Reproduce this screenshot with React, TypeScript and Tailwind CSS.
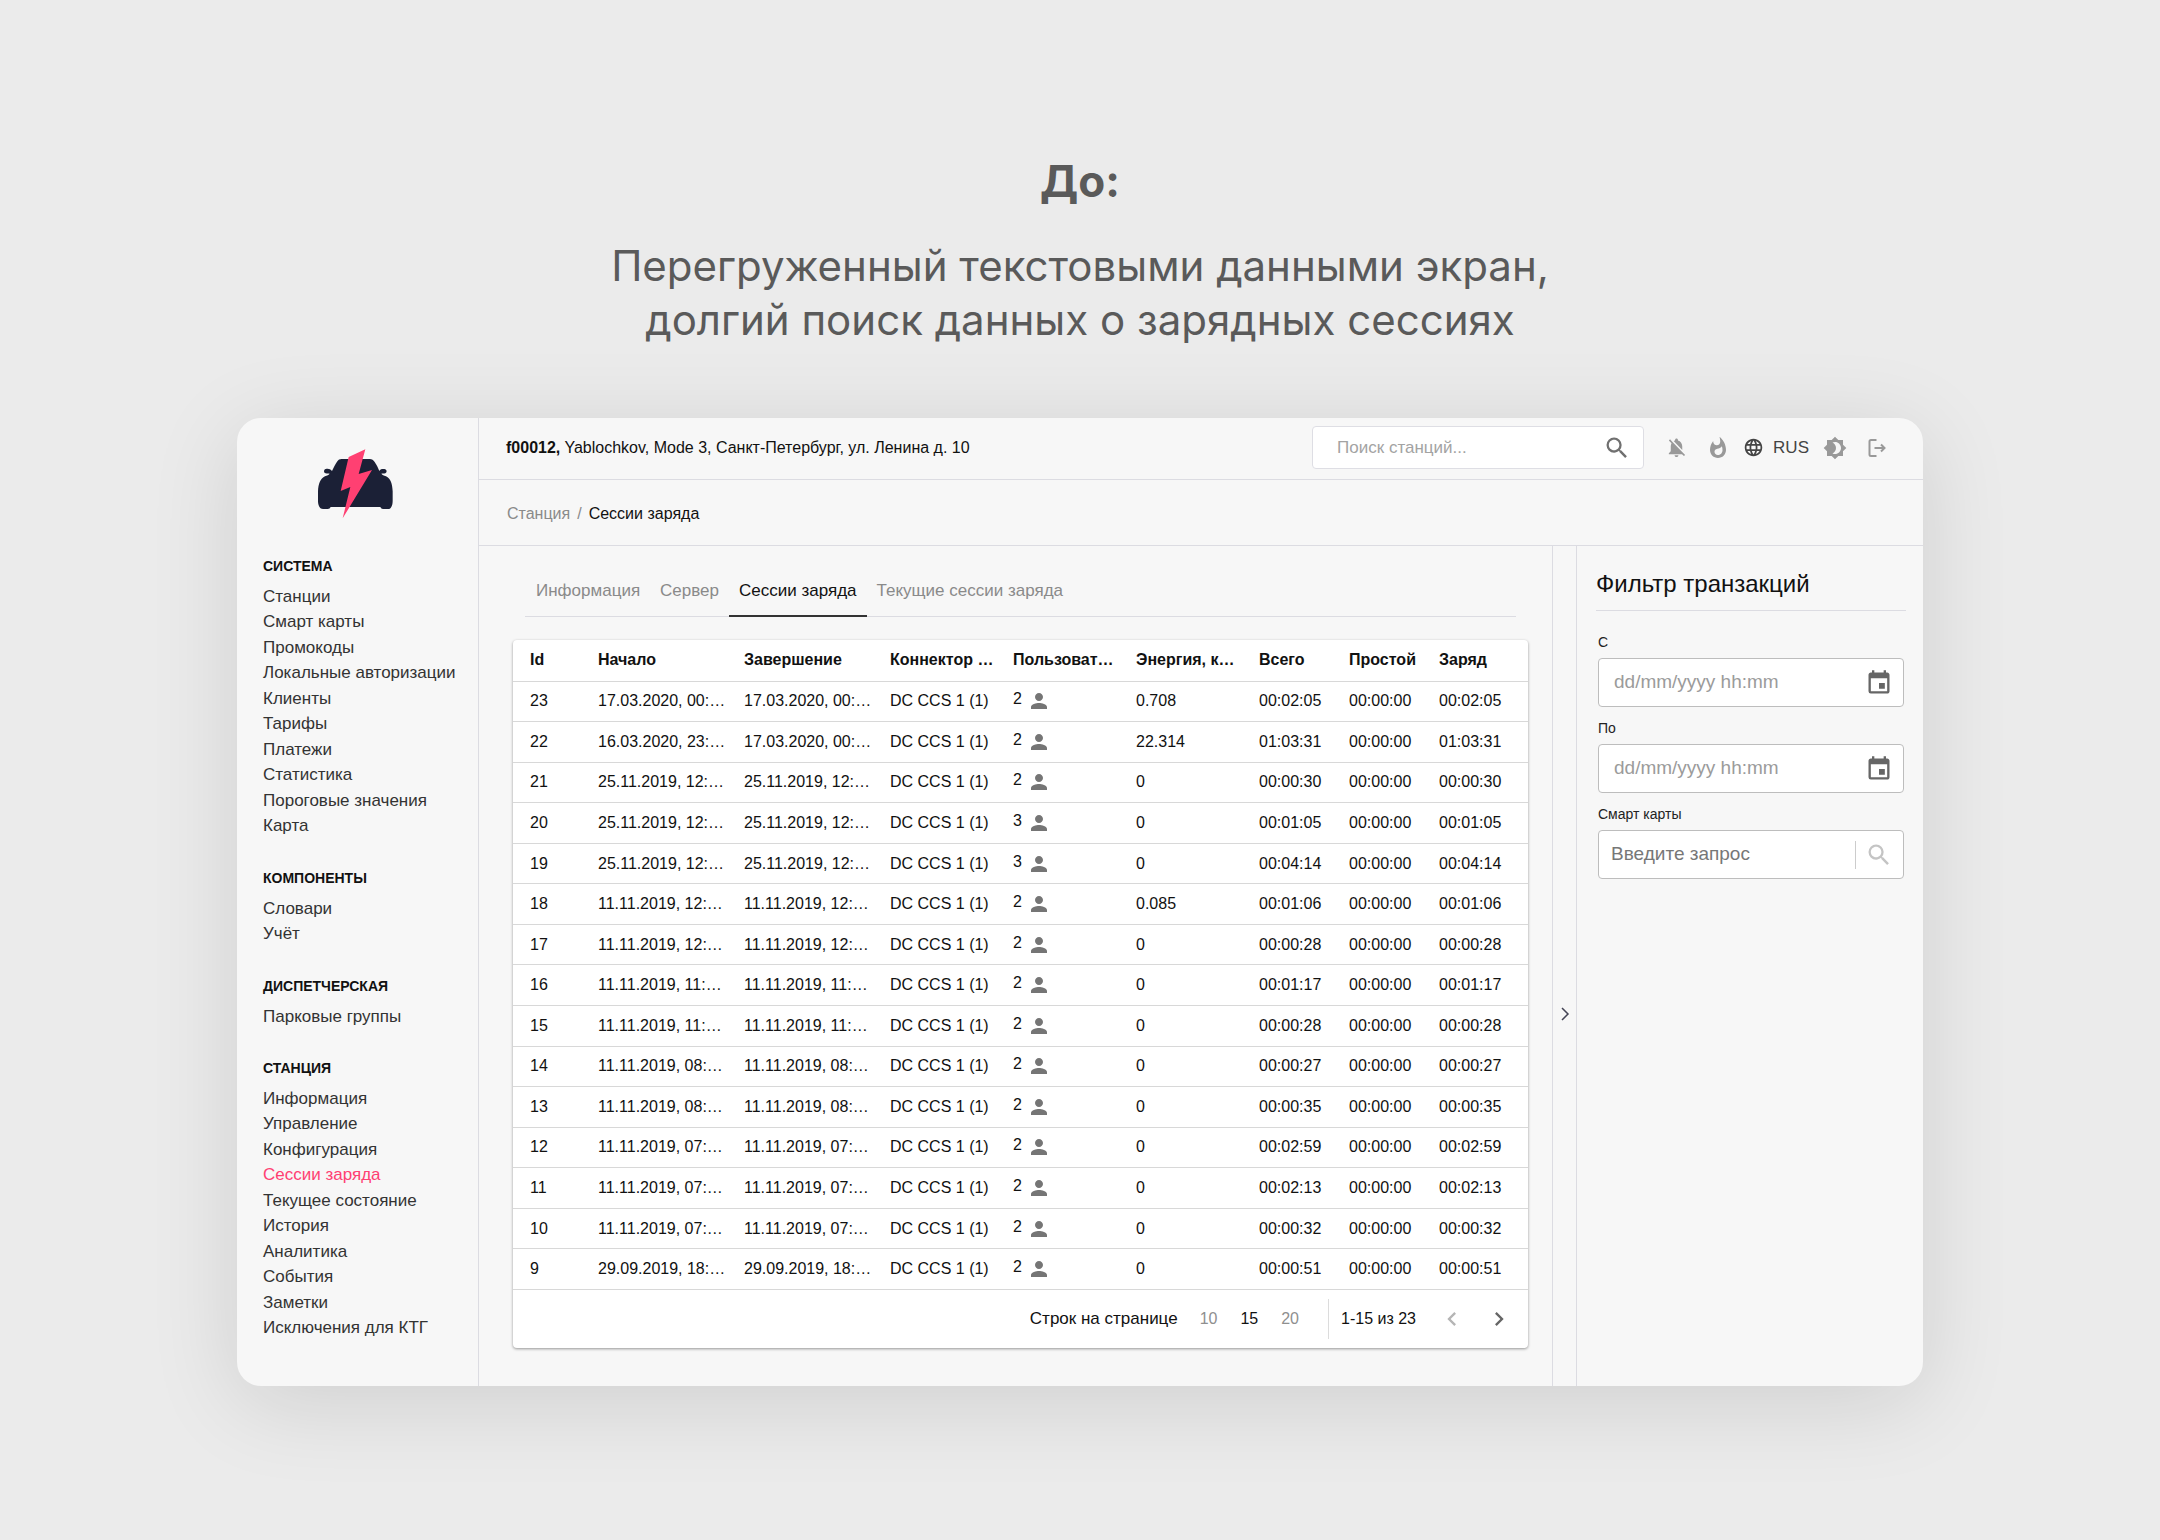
import { ReactNode, useState } from "react";
import clsx from "clsx";
import {
  MdBrightness4,
  MdChevronLeft,
  MdChevronRight,
  MdEvent,
  MdLanguage,
  MdNotificationsOff,
  MdPerson,
  MdSearch,
  MdWhatshot,
} from "react-icons/md";

interface Session {
  id: number;
  start: string;
  end: string;
  users: number;
  energy: string;
  total: string;
}

const MENU = [
  {
    title: "СИСТЕМА",
    items: [
      "Станции",
      "Смарт карты",
      "Промокоды",
      "Локальные авторизации",
      "Клиенты",
      "Тарифы",
      "Платежи",
      "Статистика",
      "Пороговые значения",
      "Карта",
    ],
  },
  { title: "КОМПОНЕНТЫ", items: ["Словари", "Учёт"] },
  { title: "ДИСПЕТЧЕРСКАЯ", items: ["Парковые группы"] },
  {
    title: "СТАНЦИЯ",
    items: [
      "Информация",
      "Управление",
      "Конфигурация",
      "Сессии заряда",
      "Текущее состояние",
      "История",
      "Аналитика",
      "События",
      "Заметки",
      "Исключения для КТГ",
    ],
  },
];

const TABS = ["Информация", "Сервер", "Сессии заряда", "Текущие сессии заряда"];

const COLUMNS = [
  { title: "Id", width: "w-[77px]" },
  { title: "Начало", width: "w-[146px]" },
  { title: "Завершение", width: "w-[146px]" },
  { title: "Коннектор …", width: "w-[123px]" },
  { title: "Пользоват…", width: "w-[123px]" },
  { title: "Энергия, к…", width: "w-[123px]" },
  { title: "Всего", width: "w-[90px]" },
  { title: "Простой", width: "w-[90px]" },
  { title: "Заряд", width: "w-[97px]" },
];

const SESSIONS: Session[] = [
  { id: 23, start: "17.03.2020, 00:…", end: "17.03.2020, 00:…", users: 2, energy: "0.708", total: "00:02:05" },
  { id: 22, start: "16.03.2020, 23:…", end: "17.03.2020, 00:…", users: 2, energy: "22.314", total: "01:03:31" },
  { id: 21, start: "25.11.2019, 12:…", end: "25.11.2019, 12:…", users: 2, energy: "0", total: "00:00:30" },
  { id: 20, start: "25.11.2019, 12:…", end: "25.11.2019, 12:…", users: 3, energy: "0", total: "00:01:05" },
  { id: 19, start: "25.11.2019, 12:…", end: "25.11.2019, 12:…", users: 3, energy: "0", total: "00:04:14" },
  { id: 18, start: "11.11.2019, 12:…", end: "11.11.2019, 12:…", users: 2, energy: "0.085", total: "00:01:06" },
  { id: 17, start: "11.11.2019, 12:…", end: "11.11.2019, 12:…", users: 2, energy: "0", total: "00:00:28" },
  { id: 16, start: "11.11.2019, 11:…", end: "11.11.2019, 11:…", users: 2, energy: "0", total: "00:01:17" },
  { id: 15, start: "11.11.2019, 11:…", end: "11.11.2019, 11:…", users: 2, energy: "0", total: "00:00:28" },
  { id: 14, start: "11.11.2019, 08:…", end: "11.11.2019, 08:…", users: 2, energy: "0", total: "00:00:27" },
  { id: 13, start: "11.11.2019, 08:…", end: "11.11.2019, 08:…", users: 2, energy: "0", total: "00:00:35" },
  { id: 12, start: "11.11.2019, 07:…", end: "11.11.2019, 07:…", users: 2, energy: "0", total: "00:02:59" },
  { id: 11, start: "11.11.2019, 07:…", end: "11.11.2019, 07:…", users: 2, energy: "0", total: "00:02:13" },
  { id: 10, start: "11.11.2019, 07:…", end: "11.11.2019, 07:…", users: 2, energy: "0", total: "00:00:32" },
  { id: 9, start: "29.09.2019, 18:…", end: "29.09.2019, 18:…", users: 2, energy: "0", total: "00:00:51" },
];

function Logo() {
  return (
    <svg viewBox="84 57 225 210" className="h-[70px] w-[75px]" aria-hidden="true">
      <path
        fill="#1b2036"
        d="M126 123C131 112 136 102 141 95C145 89 149 87 155 87H239C246 87 250 90 254 96C259 103 264 113 268 123C271 117 276 116 283 117C291 118 292 127 286 130C281 131 277 130 274 131C276 134 282 137 288 139C302 145 307 162 308 184V213C308 222 306 229 302 234C300 237 296 237 292 237H279C275 237 273 235 271 231H122C120 235 118 237 113 237H99C94 237 91 236 89 232C86 227 84 221 84 213V184C85 162 91 145 105 139C111 137 117 134 119 131C115 130 111 131 107 130C100 128 101 119 107 117C115 115 121 117 126 123Z"
      />
      <path fill="#ff4072" d="M176 81L226 58L206 132L246 120L158 265L181 171L152 183Z" />
    </svg>
  );
}

function LogoutIcon() {
  return (
    <svg viewBox="0 0 20 20" className="size-5" fill="none" stroke="currentColor" strokeWidth="2" aria-hidden="true">
      <path d="M9.500 2H4Q2.500 2 2.500 3.500V16.500Q2.500 18 4 18H9.500M7.500 10H17.500M14 6.500L17.500 10L14 13.500" />
    </svg>
  );
}

function Sidebar() {
  return (
    <aside className="w-[242px] shrink-0 border-r border-[#dcdce2] pl-[26px]">
      <div className="flex pt-[31px] pl-[55px]">
        <Logo />
      </div>
      <nav className="flex flex-col gap-[29px] pt-[37px]">
        {MENU.map((section) => (
          <div key={section.title}>
            <h2 className="mb-2 text-[14px] leading-5 font-bold text-[#111]">{section.title}</h2>
            <ul>
              {section.items.map((item) => (
                <li key={item} className="odd:h-[25px] even:h-[26px]">
                  <a
                    href="#"
                    className={clsx(
                      "text-[17px] leading-[25px] whitespace-nowrap",
                      item === "Сессии заряда" ? "text-[#ff4072]" : "text-[#333]"
                    )}
                  >
                    {item}
                  </a>
                </li>
              ))}
            </ul>
          </div>
        ))}
      </nav>
    </aside>
  );
}

function Topbar() {
  return (
    <header className="flex h-[62px] items-center justify-between border-b border-[#dcdce2] pr-9 pb-[2px] pl-[27px]">
      <p className="text-[16px] leading-5 text-[#111]">
        <b>f00012,</b> Yablochkov, Mode 3, Санкт-Петербург, ул. Ленина д. 10
      </p>
      <div className="flex items-center text-[#999]">
        <label className="mr-[21px] flex h-[43px] w-[332px] items-center rounded border border-[#dedee4] bg-white pr-3 pl-6">
          <input
            type="search"
            aria-label="Поиск станций"
            placeholder="Поиск станций..."
            className="min-w-0 flex-1 text-[17px] outline-none placeholder:text-[#a3a3a3]"
          />
          <MdSearch className="size-7 text-[#707070]" />
        </label>
        <button type="button" aria-label="Уведомления" className="mr-[18px]">
          <MdNotificationsOff className="size-[23px]" />
        </button>
        <button type="button" aria-label="Популярное" className="mr-[13px]">
          <MdWhatshot className="size-6" />
        </button>
        <button type="button" className="mr-[14px] flex items-center gap-[9px] text-[17px] text-[#444]">
          <MdLanguage className="size-[21px]" />
          RUS
        </button>
        <button type="button" aria-label="Тема" className="mr-5">
          <MdBrightness4 className="size-6" />
        </button>
        <button type="button" aria-label="Выход">
          <LogoutIcon />
        </button>
      </div>
    </header>
  );
}

function SessionsTable() {
  return (
    <table className="h-[650px] w-full table-fixed text-left text-[16px] leading-5 text-[#111]">
      <thead>
        <tr className="h-[41px]">
          {COLUMNS.map((column) => (
            <th
              key={column.title}
              className={clsx(
                "border-b border-[#d8d8d8] pl-2 font-bold whitespace-nowrap first:pl-[17px]",
                column.width
              )}
            >
              {column.title}
            </th>
          ))}
        </tr>
      </thead>
      <tbody>
        {SESSIONS.map((session) => (
          <tr key={session.id} className="*:border-b *:border-[#d8d8d8] *:pl-2 *:whitespace-nowrap *:first:pl-[17px]">
            <td>{session.id}</td>
            <td>{session.start}</td>
            <td>{session.end}</td>
            <td>DC CCS 1 (1)</td>
            <td>
              <span className="flex gap-[5px]">
                {session.users}
                <MdPerson className="size-6 text-[#757575]" />
              </span>
            </td>
            <td>{session.energy}</td>
            <td>{session.total}</td>
            <td>00:00:00</td>
            <td>{session.total}</td>
          </tr>
        ))}
      </tbody>
    </table>
  );
}

function Pagination() {
  const [pageSize, setPageSize] = useState(15);

  return (
    <div className="flex h-[58px] items-center justify-end pr-[15px] text-[16px] leading-5 text-[#111]">
      <span className="text-[17px]">Строк на странице</span>
      <div className="mr-[29px] ml-[22px] flex gap-[23px]">
        {[10, 15, 20].map((size) => (
          <button
            key={size}
            type="button"
            onClick={() => setPageSize(size)}
            className={size === pageSize ? "text-[#111]" : "text-[#8f8f8f]"}
          >
            {size}
          </button>
        ))}
      </div>
      <span className="flex h-10 items-center border-l border-[#dcdcdc] pl-3">1-15 из 23</span>
      <button type="button" aria-label="Предыдущая страница" className="ml-[22px] text-[#b5b5b5]">
        <MdChevronLeft className="size-7" />
      </button>
      <button type="button" aria-label="Следующая страница" className="ml-[19px] text-[#666]">
        <MdChevronRight className="size-7" />
      </button>
    </div>
  );
}

function Field({ id, label, placeholder, children }: { id: string; label: string; placeholder: string; children: ReactNode }) {
  const isDate = id !== "cards";
  return (
    <div>
      <label htmlFor={id} className="block text-[14px] leading-5 text-[#222]">
        {label}
      </label>
      <div
        className={clsx(
          "mt-[6px] flex h-[49px] items-center rounded border border-[#bdbdbd] bg-white pr-[10px]",
          isDate ? "pl-[15px]" : "pl-3"
        )}
      >
        <input
          id={id}
          type="text"
          placeholder={placeholder}
          className={clsx(
            "min-w-0 flex-1 text-[19px] outline-none",
            isDate ? "placeholder:text-[#9b9b9b]" : "placeholder:text-[#777]"
          )}
        />
        {children}
      </div>
    </div>
  );
}

function FilterPanel() {
  return (
    <section className="w-[347px] shrink-0 border-l border-[#dcdce2] pr-[17px] pl-[19px]">
      <h2 className="border-b border-[#dcdce2] pt-6 pb-3 text-[24px] leading-7 text-[#111]">Фильтр транзакций</h2>
      <form className="flex flex-col gap-[11px] px-[2px] pt-[21px]">
        <Field id="from" label="С" placeholder="dd/mm/yyyy hh:mm">
          <MdEvent className="size-7 text-[#666]" />
        </Field>
        <Field id="to" label="По" placeholder="dd/mm/yyyy hh:mm">
          <MdEvent className="size-7 text-[#666]" />
        </Field>
        <Field id="cards" label="Смарт карты" placeholder="Введите запрос">
          <span className="flex h-7 items-center border-l border-[#ccc] pl-[9px]">
            <MdSearch className="size-7 text-[#c4c4c4]" />
          </span>
        </Field>
      </form>
    </section>
  );
}

export default function App() {
  const [tab, setTab] = useState("Сессии заряда");

  return (
    <div className="min-h-screen bg-[#ebebeb] px-[237px] pt-[152px] pb-[154px] font-['Liberation_Sans',Arial,sans-serif]">
      <div className="text-center font-[Inter,sans-serif] text-[#5a5a5a]">
        <h1 className="text-[44px] leading-[58px] font-bold">До:</h1>
        <p className="mt-[29px] text-[42px] leading-[54px]">
          Перегруженный текстовыми данными экран,
          <br />
          долгий поиск данных о зарядных сессиях
        </p>
      </div>

      <div className="mt-[71px] flex overflow-hidden rounded-3xl bg-[#f7f7f7] shadow-[0_16px_90px_rgba(0,0,0,0.12)]">
        <Sidebar />
        <div className="flex min-w-0 flex-1 flex-col">
          <Topbar />
          <div className="flex h-[66px] items-center border-b border-[#dcdce2] pt-[3px] pl-7 text-[16px] leading-5 text-[#111]">
            <a href="#" className="text-[#8a8a8a]">
              Станция
            </a>
            <span className="px-[7px] text-[#8a8a8a]">/</span>
            <span>Сессии заряда</span>
          </div>
          <div className="flex flex-1">
            <main className="min-w-0 flex-1 px-6 pt-[18px] pb-[38px] pl-[34px]">
              <div className="mr-3 ml-3 flex border-b border-[#dcdce2] pl-px" role="tablist">
                {TABS.map((name) => (
                  <button
                    key={name}
                    type="button"
                    role="tab"
                    aria-selected={name === tab}
                    onClick={() => setTab(name)}
                    className={clsx(
                      "-mb-px border-b-2 px-[10px] pt-[17px] pb-[14px] text-[17px] leading-5",
                      name === tab ? "border-[#333] text-[#111]" : "border-transparent text-[#8a8a8a]"
                    )}
                  >
                    {name}
                  </button>
                ))}
              </div>
              <div className="mt-[23px] rounded bg-white shadow-[0_1px_3px_rgba(0,0,0,0.4)]">
                <SessionsTable />
                <Pagination />
              </div>
            </main>
            <button
              type="button"
              aria-label="Свернуть фильтр"
              className="flex w-[24px] shrink-0 items-center justify-center border-l border-[#dcdce2] pt-24 text-[#445]"
            >
              <svg viewBox="0 0 10 14" className="h-[14px] w-[10px]" fill="none" stroke="currentColor" strokeWidth="1.5">
                <path d="M2 1L8 7L2 13" />
              </svg>
            </button>
            <FilterPanel />
          </div>
        </div>
      </div>
    </div>
  );
}
